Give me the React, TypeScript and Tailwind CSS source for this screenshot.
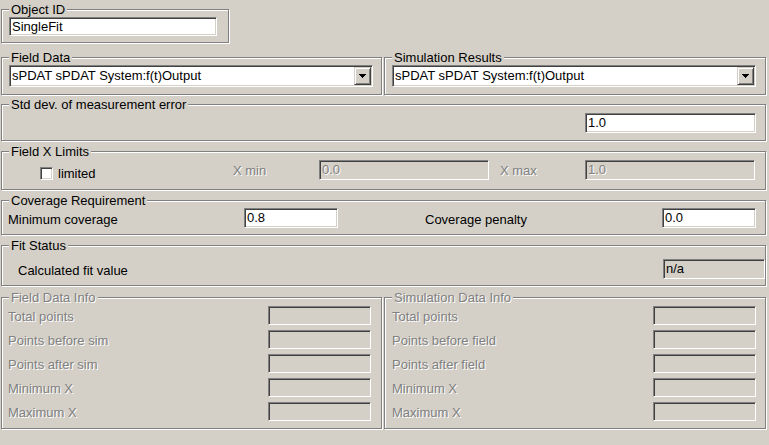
import type { ReactNode } from "react";

// Win classic 3D edges
const SUNKEN =
  "border border-t-[#808080] border-l-[#808080] border-b-white border-r-white shadow-[inset_1px_1px_0_#404040,inset_-1px_-1px_0_#d4d0c8]";
const RAISED =
  "border border-t-[#d4d0c8] border-l-[#d4d0c8] border-b-[#404040] border-r-[#404040] shadow-[inset_1px_1px_0_#fff,inset_-1px_-1px_0_#808080] bg-[#d4d0c8]";
const GRAYED = "text-[#808080] [text-shadow:1px_1px_0_#fff]";

function Group({
  title,
  disabled,
  className = "",
  children,
}: {
  title: string;
  disabled?: boolean;
  className?: string;
  children?: ReactNode;
}) {
  return (
    <fieldset
      className={`min-w-0 border border-[#808080] shadow-[1px_1px_0_#fff,inset_1px_1px_0_#fff] ${className}`}
    >
      <legend className={`ml-[7px] px-[2px] leading-[15px] bg-[#d4d0c8] ${disabled ? GRAYED : ""}`}>
        {title}
      </legend>
      {children}
    </fieldset>
  );
}

function Edit({ value, className = "", disabled }: { value?: string; className?: string; disabled?: boolean }) {
  return (
    <div
      className={`${SUNKEN} ${disabled ? `bg-[#d4d0c8] ${GRAYED}` : "bg-white"} pl-[2px] leading-[17px] whitespace-nowrap overflow-hidden ${className}`}
    >
      {value}
    </div>
  );
}

function Combo({ value }: { value: string }) {
  return (
    <div className={`${SUNKEN} bg-white ml-[7px] w-[364px] h-[22px] flex items-stretch p-[1px]`}>
      <div className="flex-1 pl-[1px] leading-[18px] whitespace-nowrap overflow-hidden">{value}</div>
      <div className={`${RAISED} w-[17px] flex items-center justify-center`}>
        <svg width="7" height="4" viewBox="0 0 7 4" shapeRendering="crispEdges">
          <path d="M0 0h7v1H0z M1 1h5v1H1z M2 2h3v1H2z M3 3h1v1H3z" fill="#000" />
        </svg>
      </div>
    </div>
  );
}

function InfoRow({ label, labelW }: { label: string; labelW: string }) {
  return (
    <div className="flex items-center h-[19px]">
      <span className={`${labelW} ${GRAYED} leading-[15px] mt-[2px]`}>{label}</span>
      <Edit disabled className="w-[103px] h-[19px]" />
    </div>
  );
}

export default function App() {
  const fieldInfo = ["Total points", "Points before sim", "Points after sim", "Minimum X", "Maximum X"];
  const simInfo = ["Total points", "Points before field", "Points after field", "Minimum X", "Maximum X"];

  return (
    <div className="w-[769px] h-[445px] overflow-hidden bg-[#d4d0c8] pl-[1px] pt-[2px] text-[13px] text-black font-['Liberation_Sans',Arial,sans-serif]">
      {/* Object ID */}
      <Group title="Object ID" className="w-[228px] h-[41px]">
        <Edit value="SingleFit" className="ml-[7px] w-[208px] h-[19px]" />
      </Group>

      {/* Field Data / Simulation Results */}
      <div className="mt-[7px] grid grid-cols-[381px_382px] gap-x-[2px]">
        <Group title="Field Data" className="h-[45px]">
          <Combo value="sPDAT sPDAT System:f(t)Output" />
        </Group>
        <Group title="Simulation Results" className="h-[45px]">
          <Combo value="sPDAT sPDAT System:f(t)Output" />
        </Group>
      </div>

      {/* Std dev */}
      <Group title="Std dev. of measurement error" className="mt-[2px] w-[765px] h-[44px]">
        <div className="flex justify-end pr-[9px] mt-[1px]">
          <Edit value="1.0" className="w-[171px] h-[20px] leading-[18px]" />
        </div>
      </Group>

      {/* Field X Limits */}
      <Group title="Field X Limits" className="mt-[3px] w-[765px] h-[46px]">
        <div className="flex items-start h-[20px] mt-[1px]">
          <div className="w-[231px] flex items-start">
            <div className={`${SUNKEN} bg-white ml-[38px] mt-[7px] w-[13px] h-[13px]`} />
            <span className="ml-[5px] mt-[6px] leading-[15px]">limited</span>
          </div>
          <span className={`w-[86px] mt-[3px] leading-[15px] ${GRAYED}`}>X min</span>
          <Edit disabled value="0.0" className="w-[170px] h-[20px] leading-[18px]" />
          <span className={`ml-[11px] w-[85px] mt-[3px] leading-[15px] ${GRAYED}`}>X max</span>
          <Edit disabled value="1.0" className="w-[170px] h-[20px] leading-[18px]" />
        </div>
      </Group>

      {/* Coverage Requirement */}
      <Group title="Coverage Requirement" className="mt-[3px] w-[765px] h-[42px]">
        <div className="flex items-start h-[20px]">
          <span className="ml-[6px] w-[236px] mt-[4px] leading-[15px]">Minimum coverage</span>
          <Edit value="0.8" className="w-[94px] h-[20px] leading-[18px]" />
          <span className="ml-[87px] w-[237px] mt-[4px] leading-[15px]">Coverage penalty</span>
          <Edit value="0.0" className="w-[94px] h-[20px] leading-[18px]" />
        </div>
      </Group>

      {/* Fit Status */}
      <Group title="Fit Status" className="mt-[3px] w-[765px] h-[48px]">
        <div className="flex items-start mt-[6px]">
          <span className="ml-[16px] w-[645px] mt-[4px] leading-[15px]">Calculated fit value</span>
          <Edit value="n/a" className="w-[102px] h-[20px] leading-[18px] !bg-[#d4d0c8]" />
        </div>
      </Group>

      {/* Info panels */}
      <div className="mt-[4px] grid grid-cols-[381px_382px] gap-x-[2px]">
        <Group title="Field Data Info" disabled className="h-[139px]">
          <div className="mt-[1px] ml-[6px] flex flex-col gap-[5px]">
            {fieldInfo.map((l) => (
              <InfoRow key={l} label={l} labelW="w-[260px]" />
            ))}
          </div>
        </Group>
        <Group title="Simulation Data Info" disabled className="h-[139px]">
          <div className="mt-[1px] ml-[7px] flex flex-col gap-[5px]">
            {simInfo.map((l) => (
              <InfoRow key={l} label={l} labelW="w-[261px]" />
            ))}
          </div>
        </Group>
      </div>
    </div>
  );
}
